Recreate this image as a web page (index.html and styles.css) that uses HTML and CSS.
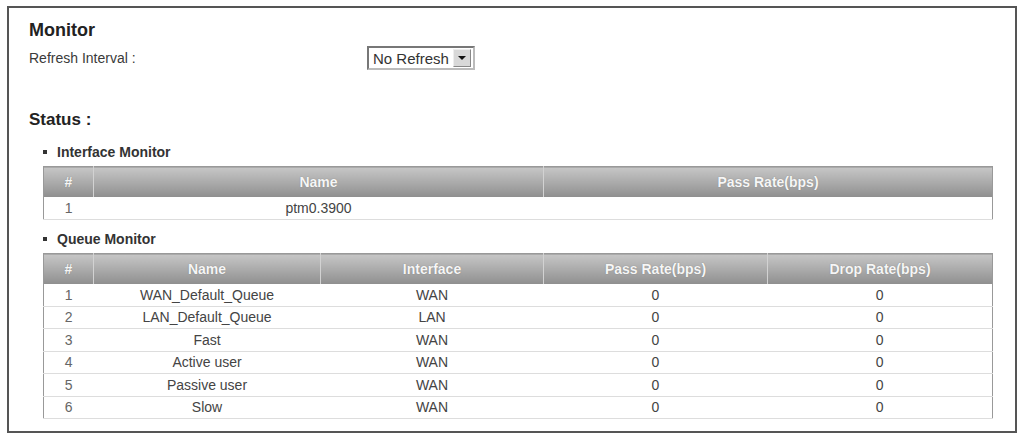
FILE: index.html
```html
<!DOCTYPE html>
<html lang="en">
<head>
  <meta charset="UTF-8" />
  <title>Monitor</title>
  <link rel="stylesheet" href="styles.css">
</head>
<body>
  <div class="frame">
    <h2 class="title">Monitor</h2>
    <div class="field">
      <span class="label">Refresh Interval :</span>
      <div class="select">
        <span class="select-text">No Refresh</span>
        <span class="select-arrow"></span>
      </div>
    </div>

    <h3 class="status">Status :</h3>

    <div class="sub">Interface Monitor</div>
    <table class="grid">
      <colgroup><col style="width:50px"><col style="width:450px"><col></colgroup>
      <thead>
        <tr><th>#</th><th>Name</th><th>Pass Rate(bps)</th></tr>
      </thead>
      <tbody>
        <tr><td>1</td><td>ptm0.3900</td><td></td></tr>
      </tbody>
    </table>

    <div class="sub">Queue Monitor</div>
    <table class="grid queue">
      <colgroup><col style="width:50px"><col style="width:227px"><col style="width:223px"><col style="width:224px"><col></colgroup>
      <thead>
        <tr><th>#</th><th>Name</th><th>Interface</th><th>Pass Rate(bps)</th><th>Drop Rate(bps)</th></tr>
      </thead>
      <tbody>
        <tr><td>1</td><td>WAN_Default_Queue</td><td>WAN</td><td>0</td><td>0</td></tr>
        <tr><td>2</td><td>LAN_Default_Queue</td><td>LAN</td><td>0</td><td>0</td></tr>
        <tr><td>3</td><td>Fast</td><td>WAN</td><td>0</td><td>0</td></tr>
        <tr><td>4</td><td>Active user</td><td>WAN</td><td>0</td><td>0</td></tr>
        <tr><td>5</td><td>Passive user</td><td>WAN</td><td>0</td><td>0</td></tr>
        <tr><td>6</td><td>Slow</td><td>WAN</td><td>0</td><td>0</td></tr>
      </tbody>
    </table>
  </div>
</body>
</html>
```

FILE: styles.css
```css
body {
  margin: 0;
  background: white;
  font-family: "Liberation Sans", Arial, sans-serif;
  color: #333;
}
.frame {
  margin: 6px 0 0 7px;
  width: 986px;
  height: 423px;
  border: 2px solid #555;
  padding: 0 0 0 20px;
}
.title {
  margin: 12px 0 0;
  font-size: 18px;
  line-height: 20px;
  font-weight: bold;
  color: #222;
}
.field {
  display: grid;
  grid-template-columns: 338px auto;
  align-items: center;
  margin-top: 6px;
  font-size: 14px;
  color: #3a3a3a;
}
.select {
  display: flex;
  align-items: center;
  justify-content: space-between;
  width: 100px;
  height: 20px;
  border: 2px solid #777;
  border-right-color: #bbb;
  border-bottom-color: #bbb;
  padding-left: 4px;
}
.select-text {
  font-size: 15px;
  color: #333;
}
.select-arrow {
  position: relative;
  width: 16px;
  height: 16px;
  margin-right: 2px;
  background: #d8d8d8;
  border: 1px solid #eee;
  border-right-color: #888;
  border-bottom-color: #888;
}
.select-arrow::after {
  content: "";
  position: absolute;
  left: 4px;
  top: 6px;
  border-left: 4px solid transparent;
  border-right: 4px solid transparent;
  border-top: 4px solid #111;
}
.status {
  margin: 40px 0 0;
  font-size: 17px;
  line-height: 20px;
  font-weight: bold;
  color: #222;
}
.sub {
  display: flex;
  align-items: center;
  gap: 10px;
  margin: 12px 0 0 14px;
  font-size: 14px;
  line-height: 20px;
  font-weight: bold;
  color: #333;
}
.sub::before {
  content: "";
  width: 4px;
  height: 4px;
  background: #333;
}
.grid {
  margin: 4px 0 0 14px;
  width: 950px;
  table-layout: fixed;
  border-collapse: collapse;
  border: 1px solid #999;
  font-size: 14px;
}
.grid + .sub {
  margin-top: 9px;
}
.grid th {
  height: 30px;
  padding: 0;
  color: #f6f6f6;
  font-weight: bold;
  background: linear-gradient(#c6c6c6, #a8a8a8 55%, #8e8e8e);
  border-left: 1px solid #d2d2d2;
  text-shadow: 0 0 1px #777;
}
.grid th:first-child {
  border-left: none;
}
.grid td {
  height: 22px;
  padding: 0;
  text-align: center;
  color: #444;
  border-bottom: 1px solid #ddd;
}
.grid td:first-child {
  color: #666;
}
.queue td {
  height: 21.5px;
}
```
